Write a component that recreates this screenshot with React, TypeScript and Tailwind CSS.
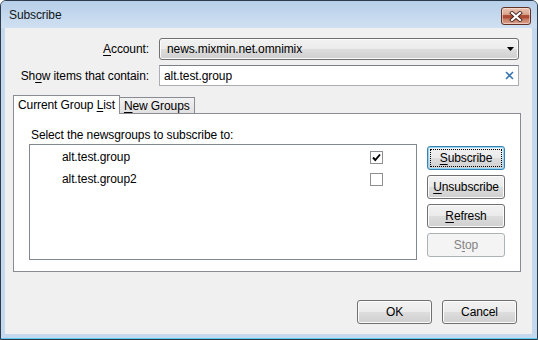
import React from "react";

function U({ children }: { children: React.ReactNode }) {
  return <span className="underline decoration-1 underline-offset-[2px]">{children}</span>;
}

const btnBase =
  "flex items-center justify-center rounded-[3px] border h-[24px] leading-none";
const btnNormal =
  "border-[#707070] bg-[linear-gradient(to_bottom,#f2f2f2_0%,#ebebeb_48%,#dddddd_52%,#cfcfcf_100%)] shadow-[inset_0_0_0_1px_#fbfbfb]";

function Btn({
  children,
  w = "w-[78px]",
  kind = "normal",
}: {
  children: React.ReactNode;
  w?: string;
  kind?: "normal" | "default" | "disabled";
}) {
  if (kind === "disabled")
    return (
      <div className={`${btnBase} ${w} border-[#adb2b5] bg-[#f4f4f4] text-[#838383]`}>{children}</div>
    );
  if (kind === "default")
    return (
      <div
        className={`${btnBase} ${w} border-[#3c7fb1] bg-[linear-gradient(to_bottom,#f2f2f2_0%,#ebebeb_48%,#dddddd_52%,#cfcfcf_100%)] shadow-[inset_0_0_0_1px_#8fd8f6] outline-1 outline-dotted outline-black outline-offset-[-4px]`}
      >
        {children}
      </div>
    );
  return <div className={`${btnBase} ${w} ${btnNormal}`}>{children}</div>;
}

function CloseButton() {
  return (
    <div className="w-[30px] h-[18px] rounded-[3px] border border-[#5e3226] flex items-center justify-center bg-[linear-gradient(to_bottom,#ebc4b3_0%,#dba58e_40%,#b0503a_46%,#a9492f_62%,#c77a63_68%,#d9a08c_100%)] shadow-[inset_0_0_0_1px_rgba(255,235,225,0.55)]">
      <svg width="14" height="11" viewBox="0 0 14 11">
        <path d="M3 2 L11 9 M11 2 L3 9" stroke="#4a2a22" strokeWidth="4" strokeLinecap="square" />
        <path d="M3 2 L11 9 M11 2 L3 9" stroke="#ffffff" strokeWidth="2.2" strokeLinecap="square" />
      </svg>
    </div>
  );
}

function CheckBox({ checked }: { checked?: boolean }) {
  return (
    <div className="w-[13px] h-[13px] border border-[#8e8f8f] bg-white flex items-center justify-center">
      {checked && (
        <svg width="11" height="11" viewBox="0 0 11 11">
          <path d="M2 5.5 L4.3 8 L9 2.5" stroke="#000" strokeWidth="1.9" fill="none" />
        </svg>
      )}
    </div>
  );
}

export default function App() {
  return (
    <div className="w-[538px] h-[340px] font-['Liberation_Sans',Arial,sans-serif] text-[12px] tracking-[-0.1px] text-black">
      <div className="w-full h-full flex flex-col border border-[#2c3a4c] rounded-t-[6px] bg-[#c4d8ee] shadow-[inset_0_-1px_0_#5fc9ee] overflow-hidden">
        {/* Title bar */}
        <div className="h-[27px] shrink-0 flex items-start justify-between pl-[8px] pr-[6px] bg-[linear-gradient(to_bottom,#b7cfe9,#d0e0f2)]">
          <span className="pt-[7px] leading-[14px] text-[#101820]">Subscribe</span>
          <div className="pt-[6px]">
            <CloseButton />
          </div>
        </div>

        {/* Client area */}
        <div className="flex-1 flex flex-col bg-[#f0f0f0] ml-[4px] mr-[5px] mb-[5px]">
          <div className="flex flex-col gap-[5px] pt-[10px]">
            <div className="flex items-center h-[22px]">
              <div className="w-[144px] text-right">
                <U>A</U>ccount:
              </div>
              <div className="ml-[10px] w-[360px] h-[22px] rounded-[3px] border border-[#707070] bg-[linear-gradient(to_bottom,#f2f2f2_0%,#ebebeb_48%,#dddddd_52%,#cfcfcf_100%)] shadow-[inset_0_0_0_1px_#fbfbfb] flex items-center pl-[7px] pr-[4px]">
                <span className="flex-1">news.mixmin.net.omnimix</span>
                <svg width="7" height="4" viewBox="0 0 7 4">
                  <path d="M0 0 H7 L3.5 4 Z" fill="#000" />
                </svg>
              </div>
            </div>
            <div className="flex items-center h-[21px]">
              <div className="w-[144px] text-right">
                Sh<U>o</U>w items that contain:
              </div>
              <div className="ml-[10px] w-[360px] h-[21px] border border-[#abadb3] border-t-[#7b7f89] bg-white flex items-center pl-[4px] pr-[4px]">
                <span className="flex-1">alt.test.group</span>
                <svg width="9" height="9" viewBox="0 0 9 9">
                  <path d="M1 1 L8 8 M8 1 L1 8" stroke="#3d78b4" strokeWidth="1.6" />
                </svg>
              </div>
            </div>
          </div>

          {/* Tabs */}
          <div className="ml-[8px] mt-[9px] flex items-end">
            <div className="relative z-10 -mb-px h-[19px] px-[4px] pt-[2px] bg-white border border-b-0 border-[#898c95] leading-[14px]">
              Current Group <U>L</U>ist
            </div>
            <div className="h-[16px] px-[4px] -ml-px bg-[linear-gradient(to_bottom,#f2f2f2,#e0e0e0)] border border-b-0 border-[#898c95] leading-[14px] pt-[1px]">
              <U>N</U>ew Groups
            </div>
          </div>
          <div className="ml-[8px] w-[508px] h-[159px] bg-white border border-[#898c95] pl-[15px] pt-[14px]">
            <div className="ml-[2px] leading-[14px]">Select the newsgroups to subscribe to:</div>
            <div className="mt-[2px] flex">
              <div className="w-[388px] h-[116px] border border-[#828790] bg-white pt-[1px]">
                <div className="h-[22px] flex items-center pl-[32px]">
                  <span className="w-[308px]">alt.test.group</span>
                  <CheckBox checked />
                </div>
                <div className="h-[22px] flex items-center pl-[32px]">
                  <span className="w-[308px]">alt.test.group2</span>
                  <CheckBox />
                </div>
              </div>
              <div className="ml-[10px] mt-[2px] flex flex-col gap-[5px]">
                <Btn kind="default">
                  <U>S</U>ubscribe
                </Btn>
                <Btn>
                  <U>U</U>nsubscribe
                </Btn>
                <Btn>
                  <U>R</U>efresh
                </Btn>
                <Btn kind="disabled">
                  S<U>t</U>op
                </Btn>
              </div>
            </div>
          </div>

          {/* Bottom buttons */}
          <div className="mt-auto flex justify-end gap-[10px] pr-[15px] pb-[10px]">
            <Btn w="w-[75px]">OK</Btn>
            <Btn w="w-[75px]">Cancel</Btn>
          </div>
        </div>
      </div>
    </div>
  );
}
